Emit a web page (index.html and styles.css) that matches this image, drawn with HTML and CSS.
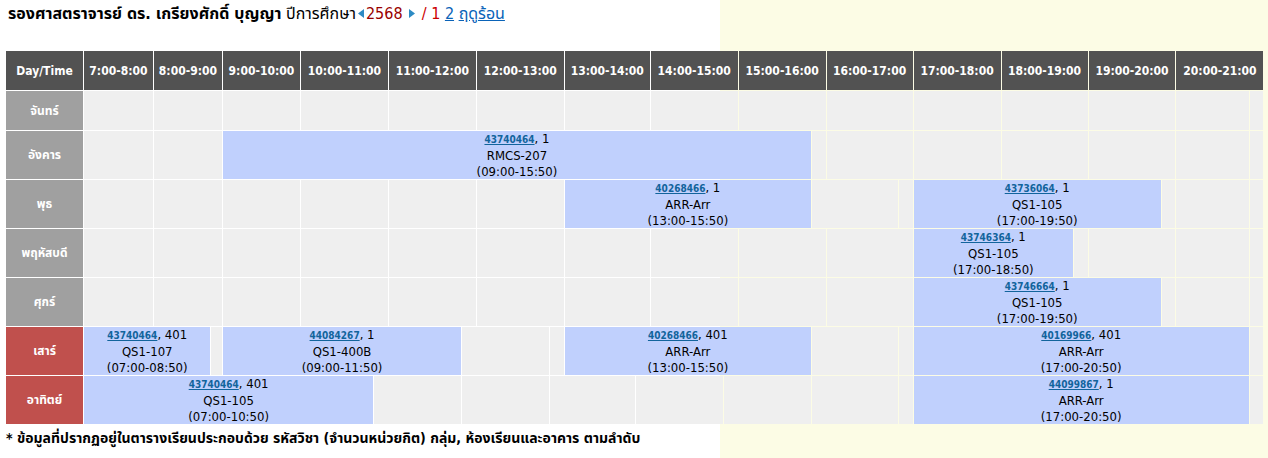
FILE: index.html
```html
<!DOCTYPE html>
<html lang="th">
<head>
<meta charset="utf-8">
<title>ตารางสอน</title>
<link rel="stylesheet" href="styles.css">
</head>
<body>
<div class="page">
  <h1 class="title">
    <span class="name">รองศาสตราจารย์ ดร. เกรียงศักดิ์ บุญญา</span>
    <span class="year-label">ปีการศึกษา</span><a class="arrow" href="#"><svg width="6" height="9" viewBox="0 0 6 9"><path d="M6 0 L0 4.5 L6 9 Z"/></svg></a><span class="year">2568</span>
    <a class="arrow" href="#"><svg width="6" height="9" viewBox="0 0 6 9"><path d="M0 0 L6 4.5 L0 9 Z"/></svg></a>
    <span class="sem">/ 1</span> <a class="sem-link" href="#">2</a> <a class="sem-link" href="#">ฤดูร้อน</a>
  </h1>

  <div class="tt">
    <div class="th">Day/Time</div>
    <div class="th hr">7:00-8:00</div>
    <div class="th hr">8:00-9:00</div>
    <div class="th hr">9:00-10:00</div>
    <div class="th hr">10:00-11:00</div>
    <div class="th hr">11:00-12:00</div>
    <div class="th hr">12:00-13:00</div>
    <div class="th hr">13:00-14:00</div>
    <div class="th hr">14:00-15:00</div>
    <div class="th hr">15:00-16:00</div>
    <div class="th hr">16:00-17:00</div>
    <div class="th hr">17:00-18:00</div>
    <div class="th hr">18:00-19:00</div>
    <div class="th hr">19:00-20:00</div>
    <div class="th hr">20:00-21:00</div>

    <!-- จันทร์ -->
    <div class="day">จันทร์</div>
    <div class="c"></div><div class="c"></div><div class="c"></div><div class="c"></div>
    <div class="c"></div><div class="c"></div><div class="c"></div><div class="c"></div>
    <div class="c"></div><div class="c"></div><div class="c"></div><div class="c"></div>
    <div class="c"></div>
    <div class="c" style="--s:5"></div><div class="c" style="--s:1"></div>

    <!-- อังคาร -->
    <div class="day">อังคาร</div>
    <div class="c"></div><div class="c"></div>
    <div class="c blk" style="--s:41"><a href="#">43740464</a>, 1<br>RMCS-207<br>(09:00-15:50)</div>
    <div class="c" style="--s:1"></div>
    <div class="c"></div><div class="c"></div><div class="c"></div><div class="c"></div>
    <div class="c" style="--s:5"></div><div class="c" style="--s:1"></div>

    <!-- พุธ -->
    <div class="day">พุธ</div>
    <div class="c"></div><div class="c"></div><div class="c"></div>
    <div class="c"></div><div class="c"></div><div class="c"></div>
    <div class="c blk" style="--s:17"><a href="#">40268466</a>, 1<br>ARR-Arr<br>(13:00-15:50)</div>
    <div class="c"></div><div class="c" style="--s:1"></div>
    <div class="c blk" style="--s:17"><a href="#">43736064</a>, 1<br>QS1-105<br>(17:00-19:50)</div>
    <div class="c" style="--s:1"></div>
    <div class="c" style="--s:5"></div><div class="c" style="--s:1"></div>

    <!-- พฤหัสบดี -->
    <div class="day">พฤหัสบดี</div>
    <div class="c"></div><div class="c"></div><div class="c"></div><div class="c"></div><div class="c"></div>
    <div class="c"></div><div class="c"></div><div class="c"></div><div class="c"></div><div class="c"></div>
    <div class="c blk" style="--s:11"><a href="#">43746364</a>, 1<br>QS1-105<br>(17:00-18:50)</div>
    <div class="c" style="--s:1"></div>
    <div class="c"></div>
    <div class="c" style="--s:5"></div><div class="c" style="--s:1"></div>

    <!-- ศุกร์ -->
    <div class="day">ศุกร์</div>
    <div class="c"></div><div class="c"></div><div class="c"></div><div class="c"></div><div class="c"></div>
    <div class="c"></div><div class="c"></div><div class="c"></div><div class="c"></div><div class="c"></div>
    <div class="c blk" style="--s:17"><a href="#">43746664</a>, 1<br>QS1-105<br>(17:00-19:50)</div>
    <div class="c" style="--s:1"></div>
    <div class="c" style="--s:5"></div><div class="c" style="--s:1"></div>

    <!-- เสาร์ -->
    <div class="day we">เสาร์</div>
    <div class="c blk" style="--s:11"><a href="#">43740464</a>, 401<br>QS1-107<br>(07:00-08:50)</div>
    <div class="c" style="--s:1"></div>
    <div class="c blk" style="--s:17"><a href="#">44084267</a>, 1<br>QS1-400B<br>(09:00-11:50)</div>
    <div class="c"></div><div class="c" style="--s:1"></div>
    <div class="c blk" style="--s:17"><a href="#">40268466</a>, 401<br>ARR-Arr<br>(13:00-15:50)</div>
    <div class="c"></div><div class="c" style="--s:1"></div>
    <div class="c blk" style="--s:23"><a href="#">40169966</a>, 401<br>ARR-Arr<br>(17:00-20:50)</div>
    <div class="c" style="--s:1"></div>

    <!-- อาทิตย์ -->
    <div class="day we">อาทิตย์</div>
    <div class="c blk" style="--s:23"><a href="#">43740464</a>, 401<br>QS1-105<br>(07:00-10:50)</div>
    <div class="c"></div><div class="c"></div><div class="c"></div>
    <div class="c"></div><div class="c"></div><div class="c"></div>
    <div class="c" style="--s:1"></div>
    <div class="c blk" style="--s:23"><a href="#">44099867</a>, 1<br>ARR-Arr<br>(17:00-20:50)</div>
    <div class="c" style="--s:1"></div>
  </div>

  <p class="note">* ข้อมูลที่ปรากฏอยู่ในตารางเรียนประกอบด้วย รหัสวิชา (จำนวนหน่วยกิต) กลุ่ม, ห้องเรียนและอาคาร ตามลำดับ</p>
</div>
</body>
</html>
```

FILE: styles.css
```css
html, body {
  margin: 0;
  padding: 0;
}

body {
  background: #fcfce5;
  font-family: Tahoma, "DejaVu Sans Condensed", "Noto Sans Thai", "Noto Sans", sans-serif;
  color: #000;
}

.page {
  width: 720px;
  min-height: 100vh;
  background: #ffffff;
  padding: 0 0 0 5px;
  box-sizing: border-box;
}

.title {
  margin: 0;
  padding: 3px 0 0 3px;
  height: 51px;
  box-sizing: border-box;
  font-size: 16px;
  line-height: 22px;
  font-weight: normal;
  white-space: nowrap;
}

.title .name {
  font-weight: bold;
}

.title .arrow {
  display: inline-block;
  vertical-align: 1px;
  margin: 0 2px;
}

.title .arrow svg {
  display: block;
  fill: #2d8bc4;
}

.title .year {
  color: #990000;
}

.title .sem {
  color: #cc0000;
}

.title .sem-link {
  color: #0a63b8;
  text-decoration: underline;
}

.tt {
  display: grid;
  grid-template-columns:
    77px
    repeat(6, calc(64px / 6))
    repeat(6, calc(63px / 6))
    repeat(6, calc(72px / 6))
    repeat(6, calc(82px / 6))
    repeat(6, calc(82px / 6))
    repeat(6, calc(82px / 6))
    repeat(6, calc(80px / 6))
    repeat(6, calc(82px / 6))
    repeat(6, calc(82px / 6))
    repeat(6, calc(81px / 6))
    repeat(6, calc(82px / 6))
    repeat(6, calc(81px / 6))
    repeat(6, calc(82px / 6))
    repeat(6, calc(82px / 6));
  grid-template-rows: 39px 39px repeat(6, 48px);
  gap: 1px;
  width: max-content;
  margin-left: 1px;
}

.th {
  background: #525252;
  color: #ffffff;
  font-weight: bold;
  font-size: 12px;
  display: flex;
  align-items: center;
  justify-content: center;
  white-space: nowrap;
}

.th.hr {
  grid-column: span 6;
}

.day {
  background: #a0a0a0;
  color: #ffffff;
  font-weight: bold;
  font-size: 12px;
  display: flex;
  align-items: center;
  justify-content: center;
}

.day.we {
  background: #c0504d;
}

.c {
  grid-column: span var(--s, 6);
  background: #efefef;
}

.c.blk {
  background: #c0d0fd;
  text-align: center;
  font-size: 13px;
  line-height: 16px;
  white-space: nowrap;
  overflow: hidden;
}

.c.blk a {
  color: #12649c;
  font-weight: bold;
  font-size: 10px;
  text-decoration: underline;
}

.note {
  margin: 6px 0 0 1px;
  font-size: 14px;
  font-weight: bold;
  line-height: 16px;
  white-space: nowrap;
}
```
